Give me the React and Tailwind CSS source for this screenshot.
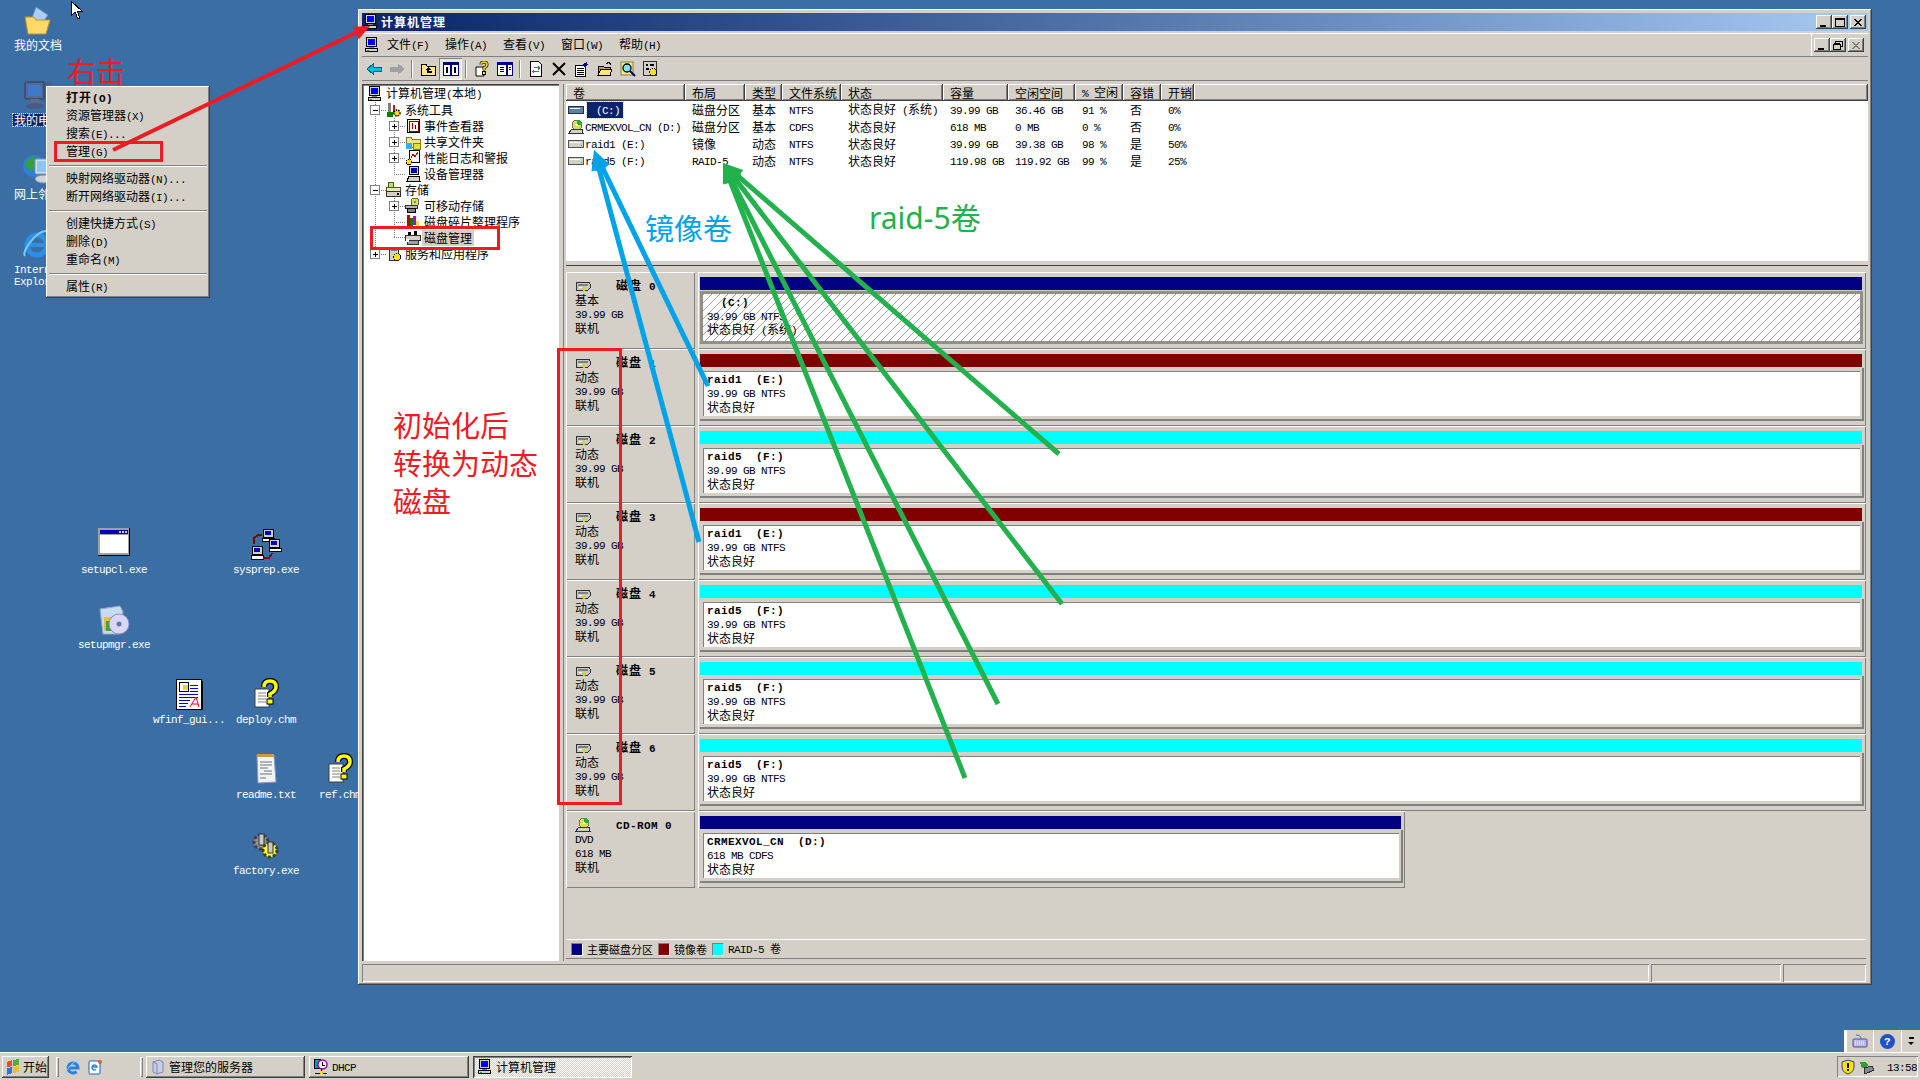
import React from 'react';

// Splits mixed text so Latin runs get half-width cells like the old bitmap font
const T = ({ children, bold }) => {
  const parts = String(children).match(/[\x00-\x7f]+|[^\x00-\x7f]+/g) || [];
  return (
    <span className={`whitespace-pre ${bold ? 'font-bold' : ''}`}>
      {parts.map((p, i) =>
        /^[\x00-\x7f]/.test(p) ? (
          <span key={i} className={`font-['Liberation_Mono',monospace] text-[11px] ${bold ? 'tracking-[0.4px]' : 'tracking-[-0.6px]'}`}>{p}</span>
        ) : (
          <span key={i} className={bold ? 'tracking-[1px]' : ''}>{p}</span>
        )
      )}
    </span>
  );
};

const raised = 'shadow-[inset_-1px_-1px_#404040,inset_1px_1px_#fff,inset_-2px_-2px_#808080]';
const sunken = 'shadow-[inset_1px_1px_#808080,inset_-1px_-1px_#fff]';

/* ---------- icons ---------- */
const Svg = ({ w = 16, h = 16, vb, crisp = true, children }) => (
  <svg width={w} height={h} viewBox={vb || `0 0 ${w} ${h}`} shapeRendering={crisp ? 'crispEdges' : 'auto'} className="shrink-0">{children}</svg>
);

const Pc = () => (
  <Svg>
    <rect x="2.5" y="0.5" width="10" height="9" fill="#d4d0c8" stroke="#000" />
    <rect x="4" y="2" width="7" height="6" fill="#0000ff" />
    <rect x="1.5" y="11.5" width="12" height="3" fill="#d4d0c8" stroke="#000" />
    <rect x="3" y="13" width="2" height="1" fill="#00c000" />
    <rect x="5" y="10" width="5" height="1" fill="#808080" />
  </Svg>
);
const Gears = () => (
  <Svg crisp={false}>
    <rect x="2" y="1" width="3" height="12" fill="#808080" />
    <rect x="7" y="3" width="2" height="9" fill="#b02020" />
    <rect x="1" y="10" width="6" height="5" fill="#008000" />
    <circle cx="11" cy="11" r="3" fill="#ffe000" stroke="#000" strokeWidth="1.4" strokeDasharray="1.5 1" />
  </Svg>
);
const EventIcon = () => (
  <Svg>
    <rect x="2.5" y="1.5" width="12" height="13" fill="#fff8c0" stroke="#000" />
    <rect x="4" y="3" width="9" height="10" fill="#fff" stroke="#800000" />
    <rect x="7" y="5" width="1" height="6" fill="#c00000" />
    <rect x="10" y="7" width="1" height="4" fill="#0000c0" />
  </Svg>
);
const ShareIcon = () => (
  <Svg>
    <path d="M1 3h5l1 2h8v8H1z" fill="#ffe680" stroke="#807040" />
    <rect x="1" y="9" width="6" height="6" fill="#30b0f0" />
    <rect x="8" y="9" width="7" height="6" fill="#e0e040" stroke="#808000" />
  </Svg>
);
const PerfIcon = () => (
  <Svg>
    <rect x="4.5" y="0.5" width="10" height="12" fill="#fff" stroke="#000" />
    <path d="M6 8l2-4 2 3 3-5" fill="none" stroke="#c00000" />
    <circle cx="4" cy="12" r="3" fill="#ffe000" stroke="#000" strokeDasharray="1.5 1" />
  </Svg>
);
const DevIcon = () => (
  <Svg>
    <rect x="4.5" y="0.5" width="9" height="8" fill="#d4d0c8" stroke="#000" />
    <rect x="6" y="2" width="6" height="5" fill="#0000c0" />
    <path d="M2 15l2-5h10l1 5z" fill="#d4d0c8" stroke="#000" />
  </Svg>
);
const StoreIcon = () => (
  <Svg>
    <circle cx="5" cy="3" r="3" fill="#c0e060" stroke="#406020" />
    <rect x="0.5" y="5.5" width="14" height="4" fill="#e8e4c8" stroke="#505050" />
    <rect x="0.5" y="9.5" width="14" height="5" fill="#d4d0c8" stroke="#303030" />
    <rect x="11" y="11" width="2" height="2" fill="#000" />
  </Svg>
);
const RemovableIcon = () => (
  <Svg>
    <circle cx="10" cy="4" r="4" fill="#e0e040" stroke="#606060" />
    <rect x="9" y="3" width="2" height="2" fill="#20a0e0" />
    <rect x="0.5" y="7.5" width="12" height="3" fill="#b8b4a8" stroke="#303030" />
    <rect x="2.5" y="10.5" width="8" height="4" fill="#808080" stroke="#000" />
  </Svg>
);
const DefragIcon = () => (
  <Svg>
    <rect x="2" y="1" width="3" height="14" fill="#c00000" />
    <rect x="5" y="4" width="3" height="11" fill="#008000" />
    <rect x="8" y="2" width="3" height="9" fill="#c000c0" />
    <rect x="11" y="7" width="3" height="5" fill="#e0e040" />
    <rect x="4" y="12" width="10" height="3" fill="#000" />
  </Svg>
);
const DiskMgmtIcon = () => (
  <Svg>
    <path d="M3 2h3v3H3zM9 1h3v4H9z" fill="#000" />
    <rect x="0.5" y="5.5" width="15" height="5" fill="#d4d0c8" stroke="#303030" />
    <rect x="2.5" y="10.5" width="11" height="4" fill="#a0a0a0" stroke="#303030" />
    <rect x="1" y="9" width="3" height="3" fill="#fff" />
  </Svg>
);
const ServiceIcon = () => (
  <Svg>
    <rect x="3.5" y="1.5" width="9" height="13" fill="#d4d0c8" stroke="#303030" />
    <rect x="5" y="3" width="6" height="2" fill="#808080" />
    <circle cx="11" cy="11" r="3.5" fill="#ffe000" stroke="#000" strokeDasharray="1.5 1" />
  </Svg>
);
const HddSmall = () => (
  <Svg w={16} h={11}>
    <path d="M2 1h12l1 2v4l-2 2H1V3z" fill="#c8c8c0" stroke="#303030" />
    <rect x="3" y="3" width="10" height="2" fill="#808080" />
    <rect x="8" y="6" width="2" height="4" fill="#d8d800" />
    <rect x="4" y="6" width="3" height="1" fill="#fff" />
  </Svg>
);
const VolIcon = ({ dark }) => (
  <Svg w={16} h={10}>
    <rect x="0.5" y="1.5" width="15" height="7" rx="1" fill={dark ? '#6080a8' : '#d4d0c8'} stroke={dark ? '#203050' : '#505050'} />
    <rect x="2" y="3" width="10" height="1" fill="#fff" />
    <rect x="13" y="6" width="1" height="1" fill="#00c000" />
  </Svg>
);
const CdIcon = () => (
  <Svg>
    <circle cx="9" cy="6" r="5" fill="#e0e040" stroke="#707070" />
    <path d="M9 1a5 5 0 0 1 5 5H9z" fill="#20b040" />
    <circle cx="9" cy="6" r="1.2" fill="#fff" />
    <path d="M1 14l3-4h10l1 4z" fill="#d4d0c8" stroke="#303030" />
  </Svg>
);

const ToolIcon = ({ k }) => {
  if (k === 'back')
    return <Svg><path d="M1 8l6-5v3h8v4H7v3z" fill="#00c0e0" stroke="#006080" /></Svg>;
  if (k === 'fwd')
    return <Svg><path d="M15 8l-6-5v3H1v4h8v3z" fill="#a0a0a0" stroke="#a0a0a0" /></Svg>;
  if (k === 'up')
    return (
      <Svg>
        <path d="M1 3h5l1 2h8v9H1z" fill="#ffe680" stroke="#000" />
        <path d="M8 6l-3 3h2v3h5v-2H9V9h2z" fill="#000" />
      </Svg>
    );
  if (k === 'tree')
    return (
      <Svg>
        <rect x="0.5" y="1.5" width="15" height="13" fill="#fff" stroke="#000080" />
        <rect x="1" y="2" width="14" height="2" fill="#000080" />
        <rect x="7" y="4" width="2" height="10" fill="#000080" />
        <path d="M3 6h2v6H3zM11 6h2v6h-2z" fill="#000" />
      </Svg>
    );
  if (k === 'help')
    return (
      <Svg crisp={false}>
        <path d="M2 6h8v9H2z" fill="#fff" stroke="#000" />
        <path d="M7 3.5Q7 1 10 1t3 2.500q0 2-3 3.500v2" fill="none" stroke="#000" strokeWidth="3" />
        <path d="M7 3.500Q7 1 10 1t3 2.500q0 2-3 3.500v2" fill="none" stroke="#ffe000" strokeWidth="1.6" />
        <rect x="8.500" y="10.500" width="3" height="3" fill="#ffe000" stroke="#000" />
      </Svg>
    );
  if (k === 'panel')
    return (
      <Svg>
        <rect x="0.5" y="1.5" width="15" height="13" fill="#fff" stroke="#000080" />
        <rect x="1" y="2" width="14" height="2" fill="#000080" />
        <rect x="9" y="4" width="2" height="10" fill="#000080" />
        <path d="M3 6h4M3 8h4M3 10h4M12 6h2M12 8h2" stroke="#000" />
      </Svg>
    );
  if (k === 'refresh')
    return (
      <Svg>
        <path d="M2.500 0.500h8l3 3v12h-11z" fill="#fff" stroke="#000" />
        <path d="M5 6h5V4l2 3-2 2V7H6zM11 11H6v2l-2-3 2-2v2h4z" fill="#00a000" />
      </Svg>
    );
  if (k === 'x')
    return <Svg crisp={false}><path d="M2 2l12 12M14 2L2 14" stroke="#000" strokeWidth="2" /></Svg>;
  if (k === 'props')
    return (
      <Svg>
        <rect x="1.500" y="4.500" width="10" height="11" fill="#fff" stroke="#000" />
        <path d="M3 7h7M3 9h7M3 11h7M3 13h7" stroke="#000" />
        <path d="M8 4l5-3 1 3-3 2z" fill="#000080" />
      </Svg>
    );
  if (k === 'open')
    return (
      <Svg>
        <path d="M1 5h5l1 1h6v8H1z" fill="#c0a040" stroke="#000" />
        <path d="M1 14l3-6h11l-2 6z" fill="#ffe680" stroke="#000" />
        <path d="M9 3l3-2 2 3" fill="none" stroke="#000" />
      </Svg>
    );
  if (k === 'find')
    return (
      <Svg crisp={false}>
        <rect x="1" y="1" width="12" height="13" fill="#ffe680" stroke="#808040" />
        <circle cx="7" cy="7" r="4" fill="#80e0ff" stroke="#000" strokeWidth="1.300" />
        <path d="M10 10l5 5" stroke="#000080" strokeWidth="2" />
      </Svg>
    );
  return (
    <Svg>
      <rect x="0.500" y="0.500" width="13" height="14" fill="#d4d0c8" stroke="#303030" />
      <path d="M3 3h2v2H3zM7 3h4v2H7zM3 7h3v2H3z" fill="#000" />
      <circle cx="10" cy="11" r="3.500" fill="#ffe000" stroke="#000" strokeDasharray="1.500 1" />
    </Svg>
  );
};

const CaptionBtn = ({ kind, disabled }) => (
  <div className={`w-[16px] h-[14px] bg-[#d4d0c8] flex items-center justify-center ${raised}`}>
    <svg width="10" height="9" viewBox="0 0 10 9" shapeRendering="crispEdges">
      {kind === 'min' && <rect x="1" y="7" width="6" height="2" fill="#000" />}
      {kind === 'max' && <path d="M0.500 1.500h9v7h-9zM0 0.500h10" fill="none" stroke="#000" />}
      {kind === 'restore' && <path d="M2.500 2V0.500h6.500v5H7.500M0.500 3.500h6.500v5H0.500zM0.500 2.500h6.500" fill="none" stroke="#000" />}
      {kind === 'close' && (
        <path d="M1 1l7 7M2 1l7 7M8 1L1 8M9 1L2 8" fill="none" stroke={disabled ? '#808080' : '#000'} shapeRendering="auto" />
      )}
    </svg>
  </div>
);

/* ---------- desktop icons ---------- */
const HelpDoc = () => (
  <Svg w={32} h={32} crisp={false}>
    <rect x="5" y="11" width="14" height="18" fill="#fff" stroke="#404040" />
    <path d="M8 15h8M8 18h8M8 21h8M8 24h8" stroke="#808080" />
    <path d="M14 9Q14 3 20 3t6 6q0 4-6 7v3" fill="none" stroke="#000" strokeWidth="6" />
    <path d="M14 9Q14 3 20 3t6 6q0 4-6 7v3" fill="none" stroke="#ffff00" strokeWidth="3.500" />
    <rect x="17" y="21" width="6" height="5" fill="#ffff00" stroke="#000" />
  </Svg>
);

const DESK_ICONS = {
  docs: (
    <Svg w={32} h={32} crisp={false}>
      <path d="M14 3l12 8-8 12-10-4z" fill="#a8d0f4" stroke="#6090c0" />
      <path d="M3 13h9l2 3h14l-4 14H6z" fill="#ffd966" stroke="#b89030" />
    </Svg>
  ),
  pc: (
    <Svg w={32} h={32} crisp={false}>
      <rect x="20" y="3" width="10" height="20" fill="#4a5f8c" />
      <rect x="3" y="3" width="19" height="17" rx="1" fill="#55688f" stroke="#2c3a5e" />
      <rect x="6" y="6" width="13" height="11" fill="#3f7ac8" />
      <path d="M9 20h8l2 5H6z" fill="#5a6c90" />
      <ellipse cx="13" cy="27" rx="9" ry="3" fill="#4a5a80" />
    </Svg>
  ),
  net: (
    <Svg w={32} h={32} crisp={false}>
      <circle cx="12" cy="13" r="11" fill="#2f7fd8" />
      <path d="M4 8l8-5 4 5-4 5-2 6-6-5z" fill="#30a040" />
      <rect x="13" y="6" width="18" height="15" rx="1" fill="#d8dce4" stroke="#8090a8" />
      <rect x="15" y="8" width="14" height="11" fill="#8cc4f4" />
      <ellipse cx="22" cy="26" rx="9" ry="4" fill="#d0d4dc" stroke="#8090a8" />
    </Svg>
  ),
  ie: (
    <Svg w={32} h={32} crisp={false}>
      <circle cx="15" cy="17" r="10" fill="none" stroke="#2c8fe8" strokeWidth="5" />
      <path d="M5 17h20" stroke="#2c8fe8" strokeWidth="4" />
      <path d="M3 28Q0 24 10 12T29 4q3 3-2 10" fill="none" stroke="#7cc8f8" strokeWidth="2" />
    </Svg>
  ),
  win: (
    <Svg w={32} h={32}>
      <rect x="0" y="0" width="32" height="28" fill="#a0a0a0" />
      <rect x="0" y="27" width="32" height="1" fill="#000" />
      <rect x="31" y="0" width="1" height="28" fill="#000" />
      <rect x="2" y="2" width="28" height="4" fill="#0000c0" />
      <rect x="21" y="3" width="2" height="2" fill="#d4d0c8" />
      <rect x="24" y="3" width="2" height="2" fill="#d4d0c8" />
      <rect x="27" y="3" width="2" height="2" fill="#d4d0c8" />
      <rect x="2" y="7" width="28" height="18" fill="#fff" />
    </Svg>
  ),
  sysprep: (
    <Svg w={32} h={32}>
      <g>
        <rect x="13" y="1" width="10" height="8" fill="#d4d0c8" stroke="#000" />
        <rect x="15" y="3" width="6" height="4" fill="#0000c0" />
        <rect x="12" y="10" width="12" height="3" fill="#fff" stroke="#000" />
        <rect x="19" y="11" width="10" height="8" fill="#d4d0c8" stroke="#000" />
        <rect x="21" y="13" width="6" height="4" fill="#0000c0" />
        <rect x="19" y="20" width="12" height="3" fill="#fff" stroke="#000" />
        <rect x="2" y="18" width="10" height="8" fill="#d4d0c8" stroke="#000" />
        <rect x="4" y="20" width="6" height="4" fill="#0000c0" />
        <rect x="1" y="27" width="12" height="4" fill="#fff" stroke="#000" />
      </g>
      <path d="M4 16V10l4-3h4M13 30h6l3-5" fill="none" stroke="#800000" strokeWidth="2" />
    </Svg>
  ),
  setup: (
    <Svg w={32} h={32} crisp={false}>
      <path d="M2 6l20-3 3 6-4 22H5z" fill="#c8daf0" stroke="#90a8c8" />
      <rect x="6" y="14" width="10" height="14" fill="#e8c040" />
      <rect x="8" y="18" width="5" height="10" fill="#40a040" />
      <circle cx="21" cy="21" r="10" fill="#d8d8f4" stroke="#9090c0" />
      <circle cx="21" cy="21" r="2.500" fill="#7070b0" />
    </Svg>
  ),
  wfinf: (
    <Svg w={28} h={32}>
      <rect x="1" y="1" width="25" height="30" fill="#fff" stroke="#000" />
      <rect x="26" y="3" width="2" height="29" fill="#000" />
      <rect x="4" y="4" width="9" height="9" fill="#fff" stroke="#000" />
      <rect x="8" y="7" width="5" height="5" fill="#e0e000" />
      <path d="M15 7h8M15 10h8M15 13h8M4 16h19M4 19h19M4 22h11M4 25h9M4 28h7" stroke="#0000c0" />
      <path d="M15 29l6-10 3 10M17 26h6" fill="none" stroke="#ff0000" shapeRendering="auto" />
    </Svg>
  ),
  chm: <HelpDoc />,
  txt: (
    <Svg w={22} h={32} crisp={false}>
      <path d="M2 2h17l2 27-18 1z" fill="#f0f4f8" stroke="#9098c0" />
      <rect x="2" y="1" width="17" height="3" fill="#c8a030" />
      <path d="M5 9h12M5 12h12M5 15h8M9 18h8M5 21h12M5 25h6" stroke="#707070" />
    </Svg>
  ),
  factory: (
    <Svg w={32} h={28} crisp={false}>
      <circle cx="11" cy="11" r="7" fill="#909090" stroke="#404040" strokeWidth="3" strokeDasharray="3 2" />
      <rect x="9" y="3" width="5" height="11" fill="#c8c8c8" stroke="#303030" />
      <circle cx="20" cy="19" r="7" fill="#ffff40" stroke="#404000" strokeWidth="3" strokeDasharray="3 2" />
      <rect x="18" y="11" width="5" height="11" fill="#c8c8c8" stroke="#303030" />
    </Svg>
  ),
};

const DESKTOP = [
  { x: 38, y: 4, label: '我的文档', icon: 'docs' },
  { x: 38, y: 79, label: '我的电脑', icon: 'pc', selected: true },
  { x: 38, y: 153, label: '网上邻居', icon: 'net' },
  { x: 38, y: 228, label: 'Internet\nExplorer', icon: 'ie' },
  { x: 114, y: 528, label: 'setupcl.exe', icon: 'win' },
  { x: 266, y: 528, label: 'sysprep.exe', icon: 'sysprep' },
  { x: 114, y: 603, label: 'setupmgr.exe', icon: 'setup' },
  { x: 189, y: 678, label: 'wfinf_gui...', icon: 'wfinf' },
  { x: 266, y: 678, label: 'deploy.chm', icon: 'chm' },
  { x: 266, y: 753, label: 'readme.txt', icon: 'txt' },
  { x: 340, y: 753, label: 'ref.chm', icon: 'chm' },
  { x: 266, y: 829, label: 'factory.exe', icon: 'factory' },
];

const DesktopIcon = ({ x, y, label, icon, selected }) => (
  <div className="absolute w-[80px] flex flex-col items-center text-white" style={{ left: x - 40, top: y }}>
    <div className="h-[32px] flex items-center justify-center">{DESK_ICONS[icon]}</div>
    <div className={`mt-[3px] px-[1px] text-center ${selected ? 'bg-[#0a246a] outline-1 outline-dotted outline-[#d4d0c8]' : ''}`}>
      {label.split('\n').map((l) => (
        <div key={l} className="h-[12px] flex items-center justify-center"><T>{l}</T></div>
      ))}
    </div>
  </div>
);

/* ---------- context menu ---------- */
const MENU = [
  [{ t: '打开(O)', b: true }, { t: '资源管理器(X)' }, { t: '搜索(E)...' }, { t: '管理(G)' }],
  [{ t: '映射网络驱动器(N)...' }, { t: '断开网络驱动器(I)...' }],
  [{ t: '创建快捷方式(S)' }, { t: '删除(D)' }, { t: '重命名(M)' }],
  [{ t: '属性(R)' }],
];

const ContextMenu = () => (
  <div className={`absolute left-[46px] top-[86px] w-[164px] h-[212px] bg-[#d4d0c8] pt-[3px] px-[2px] text-black ${raised}`}>
    {MENU.map((group, i) => (
      <div key={i}>
        {i > 0 && <div className="h-[9px] flex items-center px-[1px]"><div className="w-full h-[2px] border-t border-b border-t-[#808080] border-b-white" /></div>}
        {group.map((item) => (
          <div key={item.t} className="h-[18px] pl-[18px] flex items-center"><T bold={item.b}>{item.t}</T></div>
        ))}
      </div>
    ))}
  </div>
);

/* ---------- tree ---------- */
const TREE = [
  { level: 0, text: '计算机管理(本地)', icon: <Pc /> },
  { level: 1, text: '系统工具', icon: <Gears /> },
  { level: 2, text: '事件查看器', icon: <EventIcon /> },
  { level: 2, text: '共享文件夹', icon: <ShareIcon /> },
  { level: 2, text: '性能日志和警报', icon: <PerfIcon /> },
  { level: 2, text: '设备管理器', icon: <DevIcon /> },
  { level: 1, text: '存储', icon: <StoreIcon /> },
  { level: 2, text: '可移动存储', icon: <RemovableIcon /> },
  { level: 2, text: '磁盘碎片整理程序', icon: <DefragIcon /> },
  { level: 2, text: '磁盘管理', icon: <DiskMgmtIcon />, selected: true },
  { level: 1, text: '服务和应用程序', icon: <ServiceIcon /> },
];

const Expander = ({ x, y, plus }) => (
  <g>
    <rect x={x - 4.5} y={y - 4.5} width="9" height="9" fill="#fff" stroke="#808080" />
    <path d={`M${x - 2} ${y + 0.5}h5`} stroke="#000" />
    {plus && <path d={`M${x + 0.5} ${y - 2}v5`} stroke="#000" />}
  </g>
);

const TreeLines = () => (
  <svg className="absolute left-0 top-0" width="60" height="190" shapeRendering="crispEdges">
    <g stroke="#808080" strokeDasharray="1 1" fill="none">
      <path d="M13.500 18V170M32.500 34V90M32.500 114V153M13 26h11M13 106h11M13 170h11" />
      <path d="M32 42h11M32 58h11M32 74h11M32 90h11M32 122h11M32 138h11M32 153h11" />
    </g>
    <Expander x={13} y={26} />
    <Expander x={13} y={106} />
    <Expander x={13} y={170} plus />
    <Expander x={32} y={42} plus />
    <Expander x={32} y={58} plus />
    <Expander x={32} y={74} plus />
    <Expander x={32} y={122} plus />
  </svg>
);

const Tree = () => (
  <div className="relative w-[197px] shrink-0 bg-white pt-[2px] shadow-[inset_1px_1px_#404040,inset_2px_2px_#808080,inset_-1px_-1px_#fff] overflow-hidden">
    <TreeLines />
    {TREE.map((n) => (
      <div
        key={n.text}
        className={`relative h-[16px] flex items-center gap-[3px] whitespace-nowrap ${n.level === 0 ? 'pl-[5px]' : n.level === 1 ? 'pl-[24px]' : 'pl-[43px]'}`}
      >
        {n.icon}
        <span className={n.selected ? 'bg-[#d4d0c8] px-[2px] -ml-[2px] h-[16px] flex items-center' : ''}><T>{n.text}</T></span>
      </div>
    ))}
  </div>
);

/* ---------- volume list ---------- */
const COLS = ['卷', '布局', '类型', '文件系统', '状态', '容量', '空闲空间', '% 空闲', '容错', '开销'];
const VOLUMES = [
  ['(C:)', '磁盘分区', '基本', 'NTFS', '状态良好 (系统)', '39.99 GB', '36.46 GB', '91 %', '否', '0%'],
  ['CRMEXVOL_CN (D:)', '磁盘分区', '基本', 'CDFS', '状态良好', '618 MB', '0 MB', '0 %', '否', '0%'],
  ['raid1 (E:)', '镜像', '动态', 'NTFS', '状态良好', '39.99 GB', '39.38 GB', '98 %', '是', '50%'],
  ['raid5 (F:)', 'RAID-5', '动态', 'NTFS', '状态良好', '119.98 GB', '119.92 GB', '99 %', '是', '25%'],
];
const gridCols = 'grid grid-cols-[119px_60px_37px_59px_102px_65px_67px_48px_38px_33px_1fr]';

const VolumeList = () => (
  <div className="h-[176px] shrink-0 bg-white flex flex-col">
    <div className={`${gridCols} h-[17px] bg-[#d4d0c8]`}>
      {[...COLS, ''].map((c, i) => (
        <div key={i} className={`flex items-center pl-[7px] pt-[1px] ${raised}`}><T>{c}</T></div>
      ))}
    </div>
    {VOLUMES.map((v, r) => (
      <div key={r} className={`${gridCols} h-[17px] items-center`}>
        <div className="flex items-center gap-[1px] pl-[2px]">
          {r === 1 ? <CdIcon /> : <VolIcon dark={r === 0} />}
          {r === 0 ? (
            <span className="ml-[2px] pl-[9px] h-[16px] w-[36px] flex items-center bg-[#0a246a] text-white outline-1 outline-dotted outline-[#d4d0c8]"><T>(C:)</T></span>
          ) : (
            <T>{v[0]}</T>
          )}
        </div>
        {v.slice(1).map((c, i) => (
          <div key={i} className="pl-[7px] whitespace-nowrap"><T>{c}</T></div>
        ))}
      </div>
    ))}
  </div>
);

/* ---------- disks ---------- */
const RAID5 = { color: 'bg-[#00ffff]', vol: 'raid5  (F:)' };
const RAID1 = { color: 'bg-[#800000]', vol: 'raid1  (E:)' };
const dyn = (name, v) => ({ name, type: '动态', size: '39.99 GB', ...v, line: '39.99 GB NTFS', status: '状态良好' });
const DISKS = [
  { name: '磁盘 0', type: '基本', size: '39.99 GB', color: 'bg-[#000080]', vol: '  (C:)', line: '39.99 GB NTFS', status: '状态良好 (系统)', hatch: true },
  dyn('磁盘 1', RAID1),
  dyn('磁盘 2', RAID5),
  dyn('磁盘 3', RAID1),
  dyn('磁盘 4', RAID5),
  dyn('磁盘 5', RAID5),
  dyn('磁盘 6', RAID5),
  { name: 'CD-ROM 0', type: 'DVD', size: '618 MB', color: 'bg-[#000080]', vol: 'CRMEXVOL_CN  (D:)', line: '618 MB CDFS', status: '状态良好', cd: true },
];

const Line = ({ children, bold }) => <div className="h-[14px] flex items-center"><T bold={bold}>{children}</T></div>;

const DiskRow = ({ disk }) => (
  <div className="h-[77px] flex gap-[3px]">
    <div className="w-[129px] shrink-0 pl-[9px] pt-[6px] shadow-[inset_1px_1px_#fff,inset_-1px_-1px_#808080]">
      <div className="h-[16px] flex items-center">
        <div className="w-[41px]">{disk.cd ? <CdIcon /> : <HddSmall />}</div>
        <T bold>{disk.name}</T>
      </div>
      <div className="mt-[-1px]"><Line>{disk.type}</Line></div>
      <Line>{disk.size}</Line>
      <Line>联机</Line>
    </div>
    <div className={`${disk.cd ? 'w-[707px]' : 'flex-1'} px-[2px] pt-[5px] shadow-[inset_1px_1px_#fff,inset_-1px_-1px_#808080]`}>
      <div className={`h-[13px] mr-[2px] ${disk.color}`} />
      {disk.hatch ? (
        <div className="mt-[1px] h-[53px] border-[3px] border-[#908f88] mr-[1px]">
          <div className="h-full pl-[4px] pt-[1px] bg-[image:linear-gradient(135deg,#a8a8a8_0,#a8a8a8_8%,#fff_8%,#fff_50%,#a8a8a8_50%,#a8a8a8_58%,#fff_58%)] bg-[length:8px_8px]">
            <Line bold>{disk.vol}</Line>
            <Line>{disk.line}</Line>
            <Line>{disk.status}</Line>
          </div>
        </div>
      ) : (
        <div className="mt-[1px] h-[53px] border-r-2 border-b-2 border-[#808080] bg-[#d4d0c8] pl-[3px] pt-[3px] pr-[2px] pb-[3px]">
          <div className="h-full pl-[3px] bg-white border-l border-t border-[#808080]">
            <Line bold>{disk.vol}</Line>
            <Line>{disk.line}</Line>
            <Line>{disk.status}</Line>
          </div>
        </div>
      )}
    </div>
  </div>
);

const LEGEND = [
  { color: 'bg-[#000080]', text: '主要磁盘分区', w: 'w-[87px]' },
  { color: 'bg-[#800000]', text: '镜像卷', w: 'w-[54px]' },
  { color: 'bg-[#00ffff]', text: 'RAID-5 卷', w: 'w-[80px]' },
];

const TOOLBAR = [
  ['back', 'fwd'],
  ['up', 'tree'],
  ['help', 'panel'],
  ['refresh', 'x', 'props', 'open', 'find', 'gear'],
];

const Window = () => (
  <div className="absolute left-[358px] top-[9px] w-[1514px] h-[976px] bg-[#d4d0c8] p-[4px] pb-[3px] flex flex-col text-black shadow-[inset_-1px_-1px_#404040,inset_1px_1px_#fff,inset_-2px_-2px_#808080]">
    <div className="h-[18px] shrink-0 flex items-center bg-gradient-to-r from-[#0a246a] to-[#a6caf0] pl-[1px] pr-[2px] gap-[2px]">
      <Pc />
      <span className="text-white flex-1"><T bold>计算机管理</T></span>
      <div className="flex">
        <CaptionBtn kind="min" />
        <CaptionBtn kind="max" />
        <div className="w-[2px]" />
        <CaptionBtn kind="close" />
      </div>
    </div>

    <div className="mt-[2px] h-[24px] shrink-0 flex items-center border-t border-b border-t-white border-b-[#808080]">
      <div className="w-[25px] pl-[2px]"><Pc /></div>
      {['文件(F)', '操作(A)', '查看(V)', '窗口(W)', '帮助(H)'].map((m) => (
        <div key={m} className="w-[58px]"><T>{m}</T></div>
      ))}
      <div className="ml-auto h-full flex items-center border-l border-white pl-[2px] pr-[4px]">
        <CaptionBtn kind="min" />
        <CaptionBtn kind="restore" />
        <div className="w-[2px]" />
        <CaptionBtn kind="close" disabled />
      </div>
    </div>

    <div className="h-[24px] shrink-0 flex items-center border-b border-[#808080]">
      {TOOLBAR.map((group, g) => (
        <React.Fragment key={g}>
          {g > 0 && <div className="mx-[3px] w-[2px] h-[18px] border-l border-r border-l-[#808080] border-r-white" />}
          {group.map((k) => (
            <div
              key={k}
              className={`w-[23px] h-[22px] flex items-center justify-center ${k === 'tree' ? sunken + ' bg-[#e8e6e0]' : ''}`}
            >
              <ToolIcon k={k} />
            </div>
          ))}
        </React.Fragment>
      ))}
    </div>

    <div className="mt-[3px] flex-1 min-h-0 flex gap-[4px]">
      <Tree />
      <div className="flex-1 min-w-0 flex flex-col pl-[3px] shadow-[inset_1px_0_#808080]">
        <VolumeList />
        <div className="h-[6px] shrink-0 border-t border-b border-t-white border-b-[#404040]" />
        <div className="flex-1 min-h-0 flex flex-col pt-[6px] pr-[2px]">
          {DISKS.map((d) => (
            <DiskRow key={d.name} disk={d} />
          ))}
          <div className="mt-auto h-[20px] mb-[2px] flex items-center pl-[5px] border-t border-b border-t-white border-b-[#808080] text-[11px]">
            {LEGEND.map((l) => (
              <div key={l.text} className={`flex items-center gap-[4px] ${l.w}`}>
                <div className={`w-[12px] h-[13px] shrink-0 border border-white border-t-[#808080] border-l-[#808080] ${l.color}`} />
                <T>{l.text}</T>
              </div>
            ))}
          </div>
        </div>
      </div>
    </div>

    <div className="mt-[3px] h-[18px] shrink-0 flex gap-[2px] mr-[2px]">
      <div className={`flex-1 ${sunken}`} />
      <div className={`w-[130px] ${sunken}`} />
      <div className={`w-[83px] ${sunken}`} />
    </div>
  </div>
);

/* ---------- taskbar ---------- */
const WinFlag = () => (
  <Svg>
    <path d="M2 3l5-2v6l-5 1z" fill="#e8501c" />
    <path d="M8 1l6-1v6l-6 1z" fill="#50b030" />
    <path d="M2 9l5-1v6l-5 2z" fill="#3070e0" />
    <path d="M8 8l6-1v6l-6 1z" fill="#f0c020" />
  </Svg>
);
const SmallIE = () => (
  <Svg crisp={false}>
    <path d="M3 9h10a5 5 0 1 0-1.500 3.600" fill="none" stroke="#2c80e0" strokeWidth="3" />
    <path d="M1 15Q0 12 6 6t9-5" fill="none" stroke="#90d0f8" />
  </Svg>
);
const DesktopShow = () => (
  <Svg crisp={false}>
    <rect x="2" y="2" width="11" height="13" rx="1" fill="#fff" stroke="#2060c0" />
    <path d="M5 8h5a2.500 2.500 0 1 0-1 2.500" fill="none" stroke="#2c80e0" strokeWidth="1.400" />
    <circle cx="13" cy="3" r="2" fill="#e06020" />
  </Svg>
);
const ServerIcon = () => (
  <Svg crisp={false}>
    <path d="M3 3l6-2 4 2v10l-6 2-4-2z" fill="#c8cce8" stroke="#8088b0" />
    <path d="M3 3l4 2v10" fill="none" stroke="#8088b0" />
  </Svg>
);
const DhcpIcon = () => (
  <Svg>
    <rect x="1.500" y="0.500" width="6" height="9" fill="#00a0a0" stroke="#000" />
    <circle cx="9.500" cy="5.500" r="4.500" fill="#fff" stroke="#a000a0" strokeWidth="1.500" shapeRendering="auto" />
    <path d="M9.500 3v3h2" stroke="#000" fill="none" />
    <path d="M8 10v3M2 14h12" stroke="#000" />
    <rect x="7" y="12" width="3" height="3" fill="#e0e000" />
  </Svg>
);
const Grip = () => <div className="w-[3px] h-[20px] shadow-[inset_1px_1px_#fff,inset_-1px_-1px_#808080]" />;

const TaskButton = ({ w, icon, text, active }) => (
  <div
    className={`${w} h-[22px] flex items-center gap-[3px] pl-[4px] ${
      active
        ? 'bg-[image:repeating-conic-gradient(#fff_0_25%,#d4d0c8_0_50%)] bg-[length:2px_2px] shadow-[inset_1px_1px_#404040,inset_-1px_-1px_#fff,inset_2px_2px_#808080]'
        : raised + ' bg-[#d4d0c8]'
    }`}
  >
    {icon}
    <T>{text}</T>
  </div>
);

const Taskbar = () => (
  <div className="absolute left-0 right-0 bottom-0 h-[28px] bg-[#d4d0c8] border-t border-white flex items-center pl-[2px] text-black">
    <div className={`w-[47px] h-[22px] flex items-center gap-[2px] pl-[3px] ${raised}`}>
      <WinFlag />
      <T>开始</T>
    </div>
    <div className="ml-[7px]"><Grip /></div>
    <div className="ml-[6px] flex gap-[6px] w-[75px]">
      <SmallIE />
      <DesktopShow />
    </div>
    <Grip />
    <div className="ml-[3px] flex gap-[4px]">
      <TaskButton w="w-[159px]" icon={<ServerIcon />} text="管理您的服务器" />
      <TaskButton w="w-[160px]" icon={<DhcpIcon />} text="DHCP" />
      <TaskButton w="w-[159px]" icon={<Pc />} text="计算机管理" active />
    </div>
    <div className={`ml-auto mr-[2px] w-[81px] h-[21px] flex items-center gap-[3px] pl-[3px] ${sunken}`}>
      <Svg crisp={false}><path d="M8 1l6 2v5q0 5-6 7-6-2-6-7V3z" fill="#ffe000" stroke="#304080" /><rect x="7" y="4" width="2" height="5" fill="#000" /><rect x="7" y="10" width="2" height="2" fill="#000" /></Svg>
      <Svg><path d="M1 3h5l3 3-3 3H3z" fill="#30a030" /><path d="M5 9l8-2 2 4-9 4z" fill="#808890" stroke="#303030" /></Svg>
      <span className="ml-[9px]"><T>13:58</T></span>
    </div>
  </div>
);

const LangBar = () => (
  <div className="absolute right-0 top-[1030px] w-[76px] h-[22px] bg-[#d4d0c8] flex items-center shadow-[inset_1px_0_#fff]">
    <div className="w-[29px] h-full flex items-center justify-center border-l-2 border-white ml-[1px] border-r border-r-white">
      <Svg crisp={false}><path d="M4 2q5 0 5 4" fill="none" stroke="#6060a0" /><rect x="1" y="6" width="14" height="8" rx="1" fill="#b8b8e8" stroke="#505090" /><path d="M3 9h10M3 11h10" stroke="#fff" strokeDasharray="1 1" /></Svg>
    </div>
    <div className="w-[28px] h-full flex items-center justify-center border-r border-white">
      <div className="w-[15px] h-[15px] rounded-full bg-[#2050c8] text-white flex items-center justify-center"><T bold>?</T></div>
    </div>
    <div className="flex-1 flex flex-col items-center gap-[3px]">
      <div className="w-[5px] h-[2px] bg-black" />
      <div className="w-0 h-0 border-l-[3px] border-r-[3px] border-t-[3px] border-l-transparent border-r-transparent border-t-black" />
    </div>
  </div>
);

/* ---------- annotations ---------- */
const Arrow = ({ from, to, color, w = 5, len = 20, half = 8 }) => {
  const dx = to[0] - from[0];
  const dy = to[1] - from[1];
  const d = Math.hypot(dx, dy);
  const ux = dx / d;
  const uy = dy / d;
  const bx = to[0] - ux * len;
  const by = to[1] - uy * len;
  const pts = [
    to,
    [bx - uy * half, by + ux * half],
    [bx + uy * half, by - ux * half],
  ];
  return (
    <g>
      <line x1={from[0]} y1={from[1]} x2={bx} y2={by} stroke={color} strokeWidth={w} />
      <polygon points={pts.map((p) => p.join(',')).join(' ')} fill={color} />
    </g>
  );
};

const Annotations = () => (
  <>
    <svg className="absolute left-0 top-0 pointer-events-none" width="1920" height="1080">
      <Arrow from={[113, 150]} to={[370, 26]} color="#ed1c24" w={4} len={16} half={7} />
      <g fill="none" stroke="#ed1c24" strokeWidth="3" shapeRendering="crispEdges">
        <rect x="55.500" y="142.500" width="106" height="18" />
        <rect x="371.500" y="227.500" width="127" height="21" />
        <rect x="558.500" y="349.500" width="62" height="454" />
      </g>
      <Arrow from={[708, 386]} to={[594, 150]} color="#00a2e8" />
      <Arrow from={[699, 542]} to={[594, 150]} color="#00a2e8" />
      <Arrow from={[1059, 454]} to={[723, 163]} color="#22b14c" />
      <Arrow from={[1062, 604]} to={[723, 163]} color="#22b14c" />
      <Arrow from={[998, 704]} to={[723, 163]} color="#22b14c" />
      <Arrow from={[965, 778]} to={[723, 163]} color="#22b14c" />
    </svg>
    <div className="absolute left-[67px] top-[55px] text-[29px] leading-[30px] text-[#ed1c24]">右击</div>
    <div className="absolute left-[393px] top-[405px] text-[29px] leading-[38px] text-[#ed1c24] whitespace-nowrap">
      <div>初始化后</div>
      <div>转换为动态</div>
      <div>磁盘</div>
    </div>
    <div className="absolute left-[645px] top-[209px] text-[29px] leading-[36px] text-[#00a2e8]">镜像卷</div>
    <div className="absolute left-[869px] top-[198px] text-[30px] leading-[36px] text-[#22b14c] font-['Noto_Sans',sans-serif]">raid-5<span className="font-['Noto_Sans_CJK_SC',sans-serif]">卷</span></div>
  </>
);

const Cursor = () => (
  <svg className="absolute left-[70px] top-0" width="14" height="22" viewBox="0 0 14 22" shapeRendering="crispEdges">
    <path d="M1 1v15l4-4 3 7 2-1-3-7h5z" fill="#fff" stroke="#000" />
  </svg>
);

const App = () => (
  <div className="relative w-[1920px] h-[1080px] overflow-hidden bg-[#3a6ea5] text-[12px] leading-none font-['Noto_Sans_CJK_SC',sans-serif]">
    {DESKTOP.map((d) => (
      <DesktopIcon key={d.label} {...d} />
    ))}
    <Cursor />
    <Window />
    <ContextMenu />
    <LangBar />
    <Taskbar />
    <Annotations />
  </div>
);

export default App;
